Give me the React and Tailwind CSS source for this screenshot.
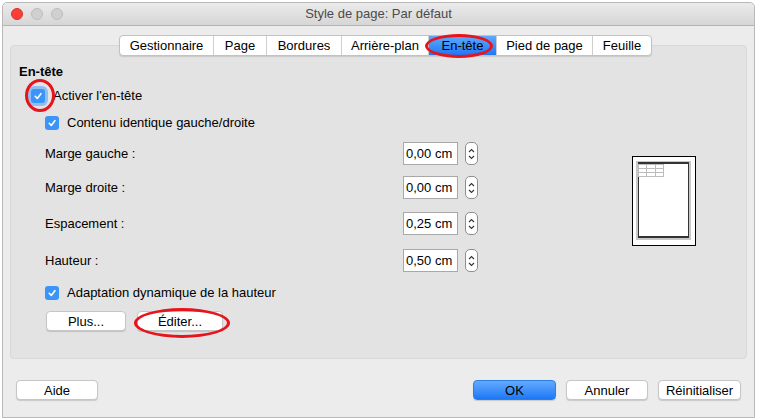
import React from "react";

const tabs = [
  { name: "Gestionnaire", w: "w-[93px]" },
  { name: "Page", w: "w-[53px]" },
  { name: "Bordures", w: "w-[75px]" },
  { name: "Arrière-plan", w: "w-[87px]" },
  { name: "En-tête", w: "w-[68px]", active: true },
  { name: "Pied de page", w: "w-[96px]" },
  { name: "Feuille", w: "w-[59px]" },
];

const fields = [
  { label: "Marge gauche :", value: "0,00 cm", mt: "mt-0" },
  { label: "Marge droite :", value: "0,00 cm", mt: "mt-[11px]" },
  { label: "Espacement :", value: "0,25 cm", mt: "mt-[13px]" },
  { label: "Hauteur :", value: "0,50 cm", mt: "mt-[14px]" },
];

function Check({ ring }) {
  return (
    <span
      className={`flex items-center justify-center w-[14px] h-[14px] rounded-[3px] bg-[#3b95f7] shrink-0 ${
        ring ? "ring-[3px] ring-[#90bdf2]" : ""
      }`}
    >
      <svg width="10" height="10" viewBox="0 0 10 10">
        <path d="M2.2 5.3 L4.3 7.4 L7.9 2.7" stroke="white" strokeWidth="1.6" fill="none" strokeLinecap="round" strokeLinejoin="round" />
      </svg>
    </span>
  );
}

function Spin() {
  return (
    <span className="w-[13px] h-[23px] rounded-[5px] border border-[#8e8e8e] bg-white flex items-center justify-center">
      <svg width="9" height="16" viewBox="0 0 9 16">
        <path d="M2 6 L4.5 3.5 L7 6 M2 10 L4.5 12.5 L7 10" stroke="#333" strokeWidth="1.1" fill="none" />
      </svg>
    </span>
  );
}

function Button({ children, w, blue }) {
  return (
    <button
      className={`${w} h-[20px] rounded-[4px] text-[13px] leading-none text-black shadow-[0_1px_1px_rgba(0,0,0,0.15)] ${
        blue
          ? "bg-gradient-to-b from-[#62aafd] to-[#1b77f6] border border-[#2b7ee8]"
          : "bg-white border border-[#c6c6c6]"
      }`}
    >
      {children}
    </button>
  );
}

function Preview() {
  return (
    <svg width="64" height="90" viewBox="0 0 64 90">
      <rect x="0.5" y="0.5" width="63" height="89" fill="white" stroke="black" />
      <rect x="5" y="6" width="53" height="77" fill="white" stroke="#c8c8c8" strokeWidth="2" />
      <line x1="6.5" y1="7" x2="6.5" y2="82" stroke="#333" />
      <line x1="56.5" y1="7" x2="56.5" y2="82" stroke="#333" />
      <rect x="6" y="6" width="51" height="2" fill="#333" />
      <rect x="6" y="80" width="51" height="2" fill="#333" />
      <g stroke="#bdbdbd" strokeWidth="1" fill="none">
        <rect x="6.5" y="8.5" width="25" height="12" />
        <line x1="6.5" y1="12.5" x2="31.5" y2="12.5" />
        <line x1="6.5" y1="16.5" x2="31.5" y2="16.5" />
        <line x1="14.5" y1="8.5" x2="14.5" y2="20.5" />
        <line x1="23.5" y1="8.5" x2="23.5" y2="20.5" />
      </g>
    </svg>
  );
}

export default function App() {
  return (
    <div className="relative w-[758px] h-[419px] overflow-hidden bg-white font-['Liberation_Sans',Arial,sans-serif] text-[13px] text-black">
      <div className="flex h-full">
        <div className="ml-[2px] mt-[2px] w-[753px] h-[416px] rounded-t-[5px] border border-[#b9b9b9] bg-[#ececec] flex flex-col">
          <div className="relative h-[23px] rounded-t-[5px] bg-gradient-to-b from-[#ebebeb] to-[#d6d6d6] border-b border-[#b4b4b4] flex items-center justify-center">
            <div className="absolute left-[8px] top-[5px] flex gap-[8px]">
              <span className="w-[12px] h-[12px] rounded-full bg-[#fc3d39] border border-[#e0302c]" />
              <span className="w-[12px] h-[12px] rounded-full bg-[#d0d0d0] border border-[#bdbdbd]" />
              <span className="w-[12px] h-[12px] rounded-full bg-[#d0d0d0] border border-[#bdbdbd]" />
            </div>
            <span className="text-[13px] text-[#4b4b4b]">Style de page: Par défaut</span>
          </div>

          <div className="mt-[9px] flex pl-[116px] relative z-10">
            <div className="flex h-[21px] rounded-[4px] border border-[#c2c2c2] bg-white shadow-[0_1px_1px_rgba(0,0,0,0.12)] overflow-hidden">
              {tabs.map((t, i) => (
                <div
                  key={t.name}
                  className={`${t.w} flex items-center justify-center ${
                    i > 0 ? "border-l border-[#cfcfcf]" : ""
                  } ${t.active ? "bg-gradient-to-b from-[#5ea9fd] to-[#1c77f6]" : ""}`}
                >
                  {t.name}
                </div>
              ))}
            </div>
          </div>

          <div className="mx-[7px] -mt-[11px] h-[314px] rounded-[4px] bg-[#e3e3e3] border border-[#d8d8d8] pl-[8px] pt-[18px]">
            <div className="font-bold leading-[15px]">En-tête</div>
            <div className="mt-[9px] ml-[12px] flex items-center gap-[8px] leading-[15px]">
              <Check ring />
              <span>Activer l'en-tête</span>
            </div>
            <div className="mt-[12px] ml-[26px] flex items-center gap-[8px] leading-[15px]">
              <Check />
              <span>Contenu identique gauche/droite</span>
            </div>

            <div className="flex mt-[12px]">
              <div className="ml-[26px] w-[441px]">
                {fields.map((f) => (
                  <div key={f.label} className={`flex items-center h-[23px] ${f.mt}`}>
                    <span className="w-[358px]">{f.label}</span>
                    <span className="w-[55px] h-[23px] bg-white border border-[#a8a8a8] flex items-center pl-[2px]">
                      {f.value}
                    </span>
                    <span className="ml-[7px]">
                      <Spin />
                    </span>
                  </div>
                ))}
              </div>
              <div className="ml-[146px] mt-[14px]">
                <Preview />
              </div>
            </div>

            <div className="mt-[13px] ml-[26px] flex items-center gap-[8px] leading-[15px]">
              <Check />
              <span>Adaptation dynamique de la hauteur</span>
            </div>
            <div className="mt-[11px] ml-[27px] flex gap-[11px]">
              <Button w="w-[80px]">Plus...</Button>
              <Button w="w-[86px]">Éditer...</Button>
            </div>
          </div>

          <div className="mt-[21px] flex items-center px-[13px]">
            <Button w="w-[82px]">Aide</Button>
            <div className="ml-auto flex gap-[10px]">
              <Button w="w-[83px]" blue>OK</Button>
              <Button w="w-[82px]">Annuler</Button>
              <Button w="w-[83px]">Réinitialiser</Button>
            </div>
          </div>
        </div>
      </div>

      <span className="absolute left-[425px] top-[34px] w-[68px] h-[24px] rounded-[50%] border-[3px] border-[#e8141b] z-20" />
      <span className="absolute left-[25px] top-[79px] w-[30px] h-[33px] rounded-[50%] border-[3px] border-[#e8141b] z-20" />
      <span className="absolute left-[134px] top-[308px] w-[96px] h-[30px] rounded-[50%] border-[3px] border-[#e8141b] z-20" />
    </div>
  );
}
